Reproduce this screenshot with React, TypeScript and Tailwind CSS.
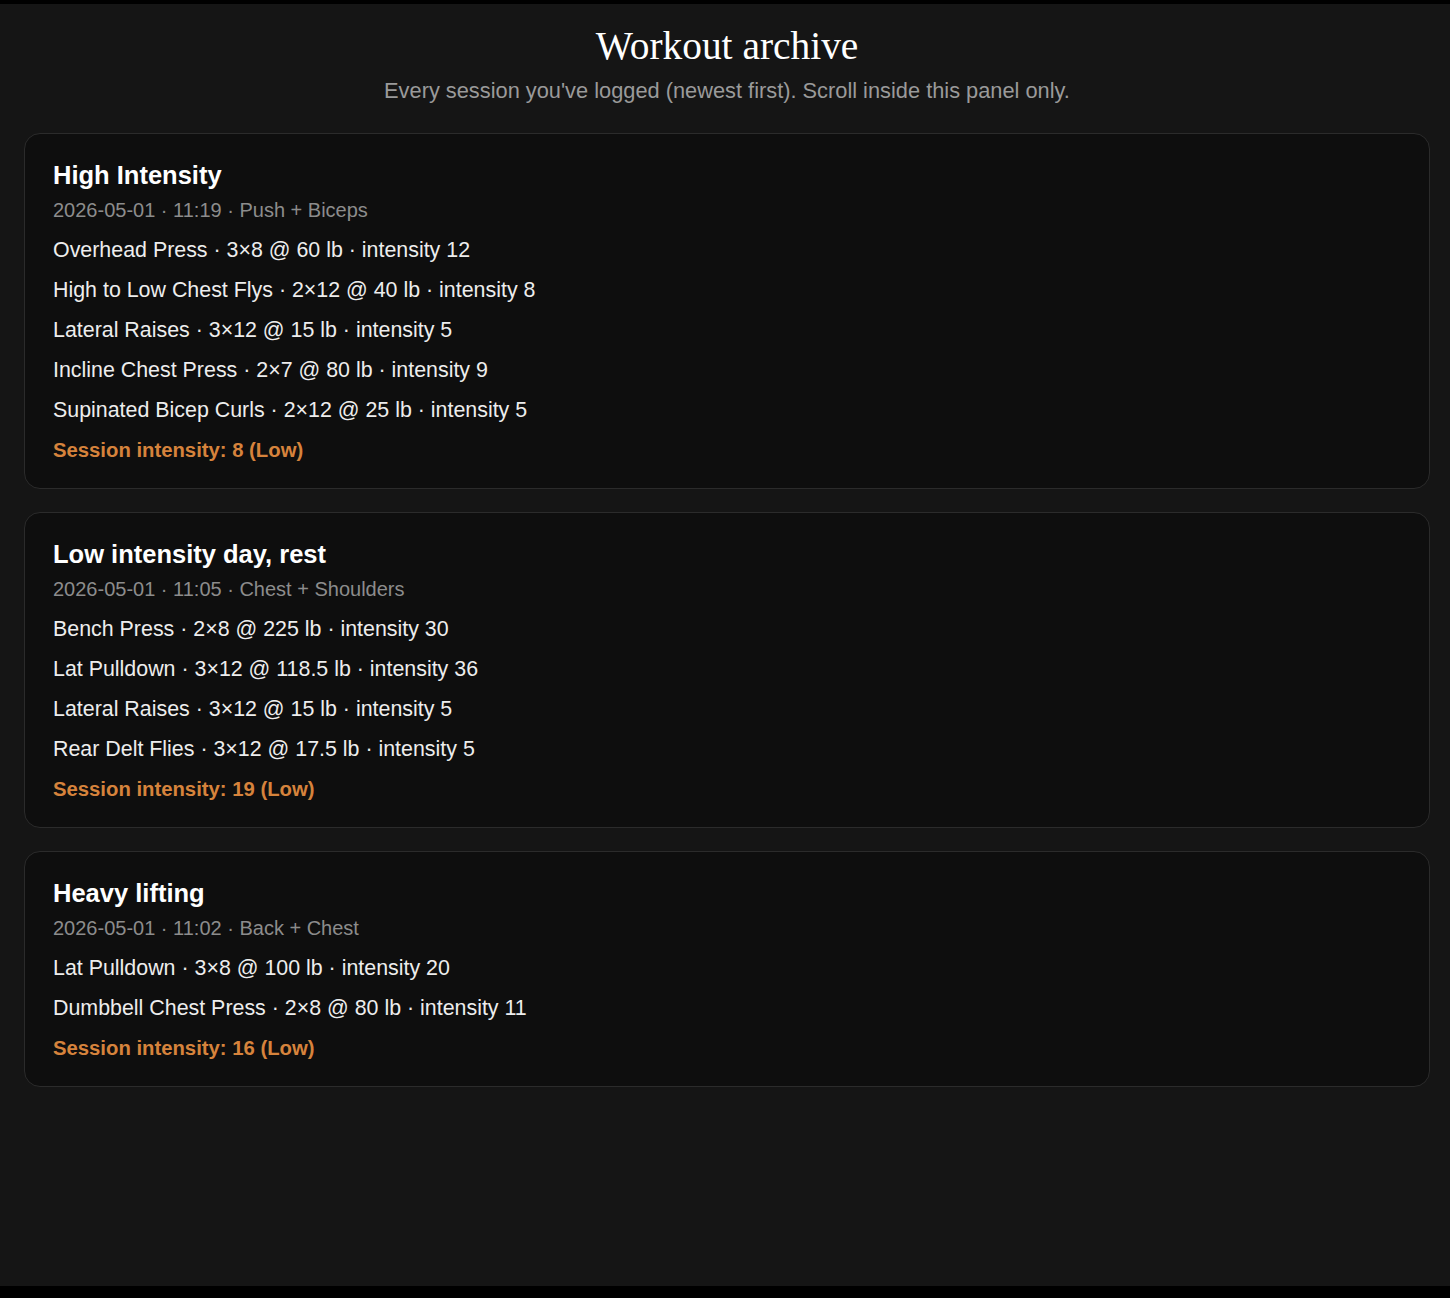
const sessions = [
  {
    title: 'High Intensity',
    meta: '2026-05-01 · 11:19 · Push + Biceps',
    lines: [
      'Overhead Press · 3x8 @ 60 lb · intensity 12',
      'High to Low Chest Flys · 2x12 @ 40 lb · intensity 8',
      'Lateral Raises · 3x12 @ 15 lb · intensity 5',
      'Incline Chest Press · 2x7 @ 80 lb · intensity 9',
      'Supinated Bicep Curls · 2x12 @ 25 lb · intensity 5',
    ],
    total: 'Session intensity: 8 (Low)',
  },
  {
    title: 'Low intensity day, rest',
    meta: '2026-05-01 · 11:05 · Chest + Shoulders',
    lines: [
      'Bench Press · 2x8 @ 225 lb · intensity 30',
      'Lat Pulldown · 3x12 @ 118.5 lb · intensity 36',
      'Lateral Raises · 3x12 @ 15 lb · intensity 5',
      'Rear Delt Flies · 3x12 @ 17.5 lb · intensity 5',
    ],
    total: 'Session intensity: 19 (Low)',
  },
  {
    title: 'Heavy lifting',
    meta: '2026-05-01 · 11:02 · Back + Chest',
    lines: [
      'Lat Pulldown · 3x8 @ 100 lb · intensity 20',
      'Dumbbell Chest Press · 2x8 @ 80 lb · intensity 11',
    ],
    total: 'Session intensity: 16 (Low)',
  },
]

function SessionCard({ s }: { s: (typeof sessions)[number] }) {
  return (
    <div className="bg-[#0e0e0e] border border-[#2b2b2b] rounded-[16px] px-[28px] pt-[25px] pb-[24px]">
      <div className="text-[25.5px] leading-[32px] font-bold text-white">{s.title}</div>
      <div className="mt-[5px] text-[20px] leading-[28px] text-[#8c8c8c]">{s.meta}</div>
      {s.lines.map((l, i) => (
        <div key={i} className="mt-[12px] text-[21.4px] leading-[28px] text-[#ededed]">
          {l.replace(/(\d)x(\d)/, '$1×$2')}
        </div>
      ))}
      <div className="mt-[12px] text-[20.3px] leading-[28px] font-bold text-[#d6833c]">{s.total}</div>
    </div>
  )
}

export default function App() {
  return (
    <div className="w-[1450px] h-[1298px] bg-black pt-[4px] pb-[12px] font-['Liberation_Sans',Arial,sans-serif]">
      <div className="h-full bg-[#151515] pl-[24px] pr-[20px]">
        <div className="pt-[21px] text-center">
          <h1 className="text-[39.4px] leading-[42px] text-white font-['Liberation_Serif',Georgia,serif]">
            Workout archive
          </h1>
          <p className="mt-[10px] text-[21.8px] leading-[28px] text-[#9a9a9a]">
            Every session you've logged (newest first). Scroll inside this panel only.
          </p>
        </div>
        <div className="mt-[28px] flex flex-col gap-[23px]">
          {sessions.map((s, i) => (
            <SessionCard key={i} s={s} />
          ))}
        </div>
      </div>
    </div>
  )
}
